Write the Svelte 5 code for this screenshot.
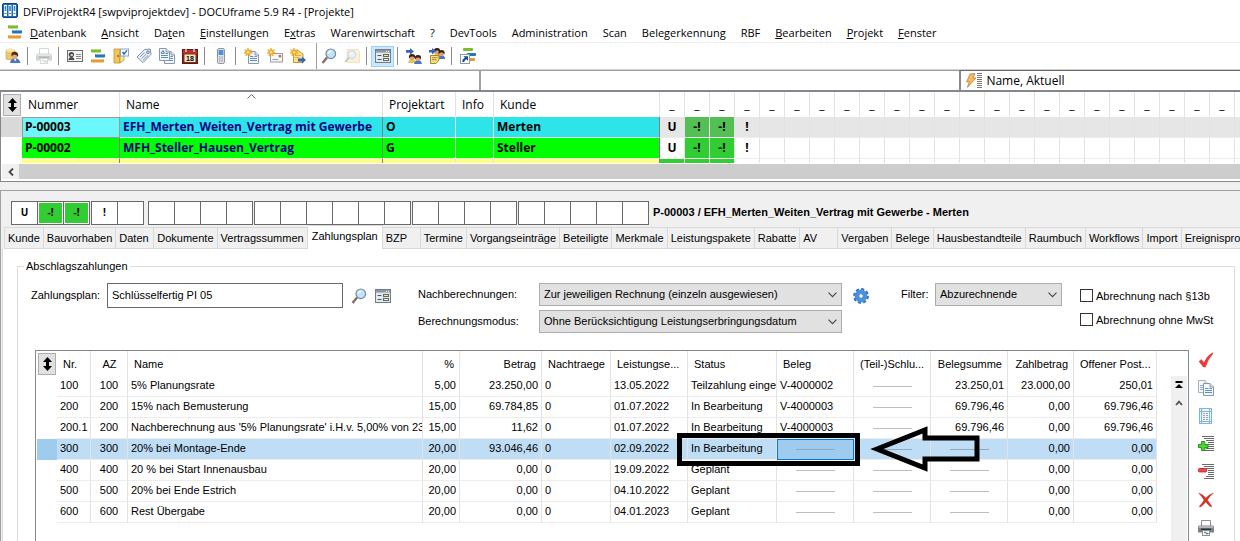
<script lang="ts">
  type Project = { nr: string; name: string; art: string; kunde: string; tone: string; marks: string[] };
  type Rate = {
    nr: string;
    az: string;
    name: string;
    pct: string;
    betrag: string;
    datum: string;
    status: string;
    beleg?: string;
    summe?: string;
    zahl: string;
    offen: string;
  };

  const menu = [
    ['', 'D', 'atenbank'],
    ['', 'A', 'nsicht'],
    ['Da', 't', 'en'],
    ['', 'E', 'instellungen'],
    ['E', 'x', 'tras'],
    ['Warenwirtschaft', '', ''],
    ['?', '', ''],
    ['DevTools', '', ''],
    ['Administration', '', ''],
    ['Scan', '', ''],
    ['Belegerkennung', '', ''],
    ['RBF', '', ''],
    ['', 'B', 'earbeiten'],
    ['', 'P', 'rojekt'],
    ['', 'F', 'enster'],
  ];

  const tools = [
    'user', '|', 'printer-off', '|', 'card', 'bars', 'folder', 'tag', 'docs', 'calendar', '|', 'phone', '|',
    'newdoc', 'newmail', 'newfolder', '||', 'search', 'search-off', '|', 'form', '|', 'people', 'peoplenote', '|', 'link',
  ];

  const sideTools = ['check', 'copy', 'sheet', 'addrow', 'delrow', 'cross', 'printer'];

  const slots = Array.from({ length: 24 }, (_, i) => i);

  const projects: Project[] = [
    { nr: 'P-00003', name: 'EFH_Merten_Weiten_Vertrag mit Gewerbe', art: 'O', kunde: 'Merten', tone: 'cyan', marks: ['U', '-!', '-!', '!'] },
    { nr: 'P-00002', name: 'MFH_Steller_Hausen_Vertrag', art: 'G', kunde: 'Steller', tone: 'green', marks: ['U', '-!', '-!', '!'] },
  ];

  const statusGroups = [
    ['U', '-!', '-!'],
    ['!', ''],
    ['', '', '', ''],
    ['', '', '', '', '', ''],
    ['', '', '', ''],
    ['', '', '', '', ''],
  ];

  const tabs = [
    'Kunde', 'Bauvorhaben', 'Daten', 'Dokumente', 'Vertragssummen', 'Zahlungsplan', 'BZP', 'Termine', 'Vorgangseinträge',
    'Beteiligte', 'Merkmale', 'Leistungspakete', 'Rabatte', 'AV', 'Vergaben', 'Belege', 'Hausbestandteile', 'Raumbuch',
    'Workflows', 'Import', 'Ereignisprotokoll',
  ];
  let activeTab = 'Zahlungsplan';

  const rates: Rate[] = [
    { nr: '100', az: '100', name: '5% Planungsrate', pct: '5,00', betrag: '23.250,00', datum: '13.05.2022', status: 'Teilzahlung einge', beleg: 'V-4000002', summe: '23.250,01', zahl: '23.000,00', offen: '250,01' },
    { nr: '200', az: '200', name: '15% nach Bemusterung', pct: '15,00', betrag: '69.784,85', datum: '01.07.2022', status: 'In Bearbeitung', beleg: 'V-4000003', summe: '69.796,46', zahl: '0,00', offen: '69.796,46' },
    { nr: '200.1', az: '200', name: "Nachberechnung aus '5% Planungsrate' i.H.v. 5,00% von 23", pct: '15,00', betrag: '11,62', datum: '01.07.2022', status: 'In Bearbeitung', beleg: 'V-4000003', summe: '69.796,46', zahl: '0,00', offen: '69.796,46' },
    { nr: '300', az: '300', name: '20% bei Montage-Ende', pct: '20,00', betrag: '93.046,46', datum: '02.09.2022', status: 'In Bearbeitung', zahl: '0,00', offen: '0,00' },
    { nr: '400', az: '400', name: '20 % bei Start Innenausbau', pct: '20,00', betrag: '0,00', datum: '19.09.2022', status: 'Geplant', zahl: '0,00', offen: '0,00' },
    { nr: '500', az: '500', name: '20% bei Ende Estrich', pct: '20,00', betrag: '0,00', datum: '04.10.2022', status: 'Geplant', zahl: '0,00', offen: '0,00' },
    { nr: '600', az: '600', name: 'Rest Übergabe', pct: '20,00', betrag: '0,00', datum: '04.01.2023', status: 'Geplant', zahl: '0,00', offen: '0,00' },
  ];
  let selectedNr = '300';
  let plan = 'Schlüsselfertig PI 05';
</script>

{#snippet person(x: number, y: number, shirt: string)}
  <g transform="translate({x} {y})">
    <path d="M-0.5 9 Q0.5 5 3.5 5 Q6.5 5 7.5 9 Z" fill={shirt} />
    <circle cx="3.5" cy="3.4" r="2.7" fill="#e0a070" />
    <path d="M0.6 4.4 Q-0.4 0 3.6 0 Q7.4 0 6.4 4.4 Q5.6 2.4 3.5 2.6 Q1.6 2.4 0.6 4.4Z" fill="#3a2418" />
  </g>
{/snippet}

{#snippet star()}
  <path d="M4 0 L5 2.6 L7.6 1.6 L6 4 L8.4 5 L5.6 5.6 L6.2 8 L4 6.4 L1.8 8 L2.4 5.6 L0 5 L2 4 L0.6 1.6 L3 2.6Z" fill="#f2a51f" stroke="#f2a51f" stroke-width="0.6" />
  <circle cx="4.1" cy="4.2" r="1.2" fill="#fff0a0" />
{/snippet}

{#snippet lens()}
  <path d="M1.5 15 L6 9.6" stroke="#7d6f68" stroke-width="2.4" />
  <circle cx="9.8" cy="5.8" r="4.8" fill="#c3e1fa" stroke="#7089a3" stroke-width="1.2" />
  <path d="M7.4 5.4 Q8 3.2 10.4 3.2" stroke="#fff" stroke-width="1.4" fill="none" />
{/snippet}

{#snippet sheet(x: number, y: number)}
  <g transform="translate({x} {y})">
    <path d="M0.5 0.5 H7 L10.5 4 V12.5 H0.5 Z" fill="#f4f8fc" stroke="#8a97a6" />
    <path d="M7 0.5 V4 H10.5" fill="#dbe4ee" stroke="#8a97a6" />
    <path d="M2 5.5 H5.5 M2 7.5 H9 M2 9.5 H9 M6.5 5.5 H9" stroke="#5c8fc7" />
  </g>
{/snippet}

{#snippet icon(name: string)}
  <svg class="icon" viewBox="0 0 16 16" width="16" height="16" aria-hidden="true">
    {#if name === 'app'}
      <rect x="0.5" y="0.5" width="15" height="14" rx="1.5" fill="#1b6fb5" stroke="#0d4377" />
      <rect x="2" y="2" width="3" height="11" fill="#fff" />
      <rect x="6.5" y="2" width="3" height="11" fill="#fff" />
      <rect x="11" y="2" width="3" height="11" fill="#fff" />
      <path d="M3.5 3 V8 M8 3 V8 M12.5 3 V8" stroke="#2f80c4" stroke-width="1.6" />
      <path d="M2.5 10.5 H4.5 M7 10.5 H9 M11.5 10.5 H13.5" stroke="#2f80c4" />
    {:else if name === 'bars'}
      <rect x="1" y="1" width="10" height="3.4" rx="1" fill="#7dbb2f" />
      <rect x="5" y="6" width="10" height="3.4" rx="1" fill="#1f78b8" />
      <rect x="1" y="11" width="13" height="3.4" rx="1" fill="#e59a32" />
      <path d="M2 1.5 H10 M6 6.5 H14 M2 11.5 H13" stroke="#fff" stroke-opacity="0.45" />
    {:else if name === 'user'}
      <path d="M1 2 Q6 0 10 2 V11 Q6 13 1 11 Z" fill="#eec768" stroke="#cda145" stroke-width="0.6" />
      <ellipse cx="5.5" cy="2.2" rx="4.5" ry="1.5" fill="#fae7ae" />
      <path d="M5 15 Q6 10 10 10 Q14 10 15.5 15 Z" fill="#4678c4" />
      <path d="M8.6 10.5 L10.2 13.5 L11.6 10.5Z" fill="#fff" />
      <circle cx="9.8" cy="7.6" r="2.9" fill="#e5a873" />
      <path d="M6.6 8.4 Q5.5 3.6 10 3.8 Q14 4 13 9 Q12 6.6 9.6 6.4 Q7.6 6.6 6.6 8.4Z" fill="#4b2a16" />
    {:else if name === 'printer' || name === 'printer-off'}
      <g opacity={name === 'printer-off' ? 0.35 : 1}>
        <path d="M3.5 0.5 H12.5 V7 H3.5Z" fill="#fdfdfd" stroke="#8f8f8f" />
        <path d="M1 5.5 H15 Q16 5.5 16 8 V12.5 H0 V8 Q0 5.5 1 5.5Z" fill="#7d8084" />
        <path d="M1 7 H15" stroke="#c9ccd0" stroke-width="1.4" />
        <rect x="3" y="8.6" width="10" height="1.6" fill="#2c2f33" />
        <rect x="4.5" y="10.5" width="7" height="5" fill="#fff" stroke="#8f8f8f" />
        <path d="M6 12.5 H8" stroke="#43a86a" stroke-width="1.6" />
        <path d="M8 13.5 H10.5" stroke="#3d7fd0" stroke-width="1.6" />
      </g>
    {:else if name === 'card'}
      <rect x="0.5" y="2.5" width="15" height="11" fill="#f3f3f3" stroke="#6c6c6c" />
      <path d="M1.4 12 Q1.8 9 4.4 9 Q7 9 7.4 12Z" fill="#4a4a4a" />
      <circle cx="4.4" cy="6.6" r="2.6" fill="#444" />
      <circle cx="4.7" cy="7" r="1.3" fill="#ccc" />
      <path d="M9 6.5 H14 M9 8.5 H14 M9 10.5 H14" stroke="#8a8a8a" />
    {:else if name === 'folder'}
      <path d="M1 1 H7 V15 H1Z" fill="#f0c65a" stroke="#c4922b" stroke-width="0.8" />
      <path d="M7 4 H11 V12 L7 15Z" fill="#fbe39a" stroke="#c4922b" stroke-width="0.8" />
      <rect x="7.5" y="1" width="8" height="7" fill="#fff" stroke="#86a7cf" />
      <path d="M9.5 4 L11 6 L14 2.4" stroke="#2c66b8" stroke-width="1.4" fill="none" />
      <circle cx="5" cy="8" r="0.9" fill="#8c6112" />
    {:else if name === 'tag'}
      <path d="M1 9 L8.6 1.6 L14.2 1 L15 6.4 L7 14.6 Z" fill="#eef2f7" stroke="#7c8ea4" />
      <circle cx="12" cy="4.2" r="1.3" fill="#fff" stroke="#4c78ac" />
      <path d="M4 9 L8.6 4.6 M5.6 10.6 L10.4 6 M7 12.2 L12 7.4" stroke="#7d95b3" />
    {:else if name === 'docs'}
      {@render sheet(5, 3)}
      {@render sheet(0, 0)}
      <path d="M2 5 L4 2.5 L5.4 5" stroke="#3f6fae" fill="none" />
    {:else if name === 'calendar'}
      <rect x="0.5" y="1.5" width="15" height="14" fill="#7d2a22" stroke="#5c1d18" />
      <rect x="1" y="2" width="14" height="3.6" fill="#b83427" />
      <path d="M4 0.5 V4 M12 0.5 V4" stroke="#d8d8d8" stroke-width="1.4" />
      <rect x="2.5" y="6.5" width="11" height="7.5" fill="#f7e9c4" />
      <text x="8" y="13" text-anchor="middle" font-family="Liberation Sans, sans-serif" font-weight="bold" font-size="7" fill="#000">18</text>
    {:else if name === 'phone'}
      <rect x="4.5" y="0.5" width="7" height="15" rx="1.6" fill="#dfe3e8" stroke="#8c949d" />
      <rect x="5.6" y="2" width="4.8" height="5" fill="#4a90dc" />
      <path d="M6 9 H10 M6 11 H10 M6 13 H10" stroke="#8c949d" stroke-dasharray="1 0.6" />
    {:else if name === 'newdoc'}
      {@render sheet(4, 3)}
      {@render star()}
    {:else if name === 'newmail'}
      <rect x="3.5" y="5.5" width="12" height="8.5" fill="#f6f6f6" stroke="#9c9c9c" />
      <rect x="11.6" y="7" width="2.6" height="2.4" fill="#c96a52" />
      <path d="M5.5 11.5 H11" stroke="#9c9c9c" />
      {@render star()}
    {:else if name === 'newfolder'}
      <path d="M3.5 2.5 H8 L13 6 V14.5 H3.5Z" fill="#fbe08a" stroke="#c99a2e" />
      <path d="M5 7.5 H11 M5 9.5 H9" stroke="#d6b24a" />
      <path d="M8 10.5 H12 V8.4 L16 12 L12 15.6 V13.4 H8Z" fill="#2f66c4" />
      {@render star()}
    {:else if name === 'search'}
      {@render lens()}
    {:else if name === 'search-off'}
      <g opacity="0.4">
        <path d="M3 1.5 H13.5 L15.5 4 V14.5 H3Z" fill="#f2dc9c" stroke="#d8bb6e" />
        <g transform="translate(0 2) scale(0.8)">{@render lens()}</g>
      </g>
    {:else if name === 'form'}
      <rect x="0.5" y="1.5" width="15" height="13" fill="#e6e9ec" stroke="#6e7d8c" />
      <rect x="1" y="2" width="14" height="2.6" fill="#8b98a6" />
      <path d="M11 3.3 H12 M13 3.3 H14" stroke="#fff" />
      <path d="M2.5 7.5 H6.5 M2.5 11.5 H6.5" stroke="#4f5b67" />
      <rect x="8.5" y="6.5" width="5" height="2" fill="#f5e98a" stroke="#5f665c" />
      <rect x="8.5" y="10.5" width="5" height="2" fill="#fff" stroke="#5f665c" />
    {:else if name === 'people'}
      <path d="M0 2 H4 V0 L8 3.4 L4 6.8 V4.8 H0Z" fill="#3465c0" />
      {@render person(2.5, 6, '#e8c14a')}
      {@render person(8.5, 7, '#4678c4')}
    {:else if name === 'peoplenote'}
      {@render person(4.5, 0, '#e8c14a')}
      {@render person(9, 2, '#4678c4')}
      <path d="M0 2 H3 V0 L7 3.2 L3 6.4 V4.4 H0Z" fill="#3465c0" />
      <path d="M1.5 7.5 H10 V12 L7 15.5 H1.5Z" fill="#f5df86" stroke="#a9882f" />
      <path d="M3 9.7 H8.5 M3 11.7 H7.5" stroke="#a9882f" />
    {:else if name === 'link'}
      <rect x="3" y="0" width="10" height="3" rx="1" fill="#7dbb2f" />
      <rect x="7" y="5" width="9" height="3" rx="1" fill="#1f78b8" />
      <rect x="8" y="10" width="7" height="3" rx="1" fill="#e59a32" />
      <rect x="0.5" y="6.5" width="9" height="9" fill="#fff" stroke="#8b98a6" />
      <path d="M3.4 8.2 H8 V12.8 L6.4 11.2 Q4.6 12 4.2 14 H2.2 Q2 11.4 4.8 9.8Z" fill="#1c4b96" />
    {:else if name === 'bolt'}
      <path d="M5 1 L10 0.6 L8 5 L11 5 L2.4 14.4 L4.4 8.6 L1.6 9Z" fill="#f3bb62" stroke="#b98039" stroke-width="0.8" />
    {:else if name === 'check'}
      <path d="M1 9.4 L3.4 7.6 L6 10.6 Q9 4 14.4 0.8 L15 1.4 Q10 7 7.4 15 L5.4 15Z" fill="#f0383d" stroke="#c9282e" stroke-width="0.4" />
    {:else if name === 'copy'}
      <g opacity="0.75">{@render sheet(0, 0)}</g>
      {@render sheet(5, 3)}
    {:else if name === 'sheet'}
      <rect x="1.5" y="0.5" width="12" height="15" fill="#eef6fb" stroke="#7cb8dc" />
      <path d="M1.5 3.5 H13.5 M3.5 0.5 V15.5 M11.5 0.5 V15.5 M1.5 13.5 H13.5" stroke="#7cb8dc" />
      <path d="M5 5.5 H10 M5 7.5 H10 M5 9.5 H10 M5 11.5 H10" stroke="#93a4b3" />
      <path d="M7.5 5 V12" stroke="#eef6fb" />
    {:else if name === 'addrow' || name === 'delrow'}
      <path d="M4 0.5 H16 M6 2.5 H16 M8 4.5 H16 M10 6.5 H16 M10 8.5 H16 M10 10.5 H16 M8 12.5 H16 M6 14.5 H16" stroke="#6a6a6a" />
      {#if name === 'addrow'}
        <path d="M3.6 5.5 H6.8 V8.6 H10 V11.6 H6.8 V14.6 H3.6 V11.6 H0.5 V8.6 H3.6Z" fill="#4fd636" stroke="#1f9412" />
      {:else}
        <rect x="0.5" y="4.5" width="8" height="3.4" rx="1" fill="#f2484c" stroke="#c9282e" />
      {/if}
    {:else if name === 'cross'}
      <path d="M0.8 1 Q5 2.4 7.8 6 Q11 2.4 15.4 1 Q11 5 9.4 8 Q11.4 11 14 14.6 L12 14.4 Q9.6 12.2 7.8 10 Q5.4 13 2 15.2 L1.4 14.2 Q4.6 11 6 8 Q3.6 4.4 0.8 1Z" fill="#d8321f" stroke="#b52a1a" stroke-width="0.4" />
    {:else if name === 'gear'}
      <circle cx="8" cy="8" r="6.6" fill="none" stroke="#2f6fc0" stroke-width="2.6" stroke-dasharray="3 2.18" />
      <circle cx="8" cy="8" r="4.4" fill="none" stroke="#4a90e0" stroke-width="4" />
      <circle cx="8" cy="8" r="2.2" fill="#fff" stroke="#2a65b0" stroke-width="0.8" />
    {/if}
  </svg>
{/snippet}

{#snippet sorter()}
  <button class="sorter" type="button" aria-label="Sortierung">
    <svg viewBox="0 0 9 14" width="9" height="14" aria-hidden="true">
      <path d="M4.5 0 L9 5 H6 V9 H9 L4.5 14 L0 9 H3 V5 H0Z" fill="#000" />
    </svg>
  </button>
{/snippet}

{#snippet chevron()}
  <svg class="chevron" viewBox="0 0 9 6" width="9" height="6" aria-hidden="true">
    <path d="M0.5 0.7 L4.5 4.7 L8.5 0.7" fill="none" stroke="#444" stroke-width="1.1" />
  </svg>
{/snippet}

<div class="window">
  <header class="title">
    {@render icon('app')}
    <span>DFViProjektR4 [swpviprojektdev] - DOCUframe 5.9 R4 - [Projekte]</span>
  </header>

  <nav class="menu">
    {@render icon('bars')}
    {#each menu as [before, key, after]}
      <button type="button">{before}{#if key}<u>{key}</u>{/if}{after}</button>
    {/each}
  </nav>

  <div class="tools">
    {#each tools as tool}
      {#if tool === '|' || tool === '||'}
        <i class:full={tool === '||'}></i>
      {:else}
        <button type="button" aria-label={tool} class:on={tool === 'form'}>{@render icon(tool)}</button>
      {/if}
    {/each}
  </div>

  <div class="filters">
    <input type="text" aria-label="Suche" />
    <input type="text" aria-label="Filter" />
    <button type="button">
      {@render icon('bolt')}
      <span class="grip"></span>
      Name, Aktuell
    </button>
  </div>

  <section class="projects">
    <table>
      <colgroup>
        <col style="width: 21px" />
        <col style="width: 98px" />
        <col style="width: 263px" />
        <col style="width: 73px" />
        <col style="width: 38px" />
        <col style="width: 166px" />
        {#each slots as slot (slot)}<col style="width: 25px" />{/each}
      </colgroup>
      <thead>
        <tr>
          <th class="pick">{@render sorter()}</th>
          <th>Nummer</th>
          <th class="sorted">
            Name
            <svg viewBox="0 0 9 5" width="9" height="5" aria-hidden="true"><path d="M0.5 4.5 L4.5 0.6 L8.5 4.5" fill="none" stroke="#666" /></svg>
          </th>
          <th>Projektart</th>
          <th>Info</th>
          <th>Kunde</th>
          {#each slots as slot (slot)}<th class="slot">_</th>{/each}
        </tr>
      </thead>
      <tbody>
        {#each projects as project, i}
          <tr class={project.tone} class:current={i === 0}>
            <td class="pick"></td>
            <td class="nr">{project.nr}</td>
            <td class="name">{project.name}</td>
            <td>{project.art}</td>
            <td></td>
            <td class="dark">{project.kunde}</td>
            {#each slots as slot (slot)}
              <td class="slot" class:ok={project.marks[slot] === '-!'}>{project.marks[slot] ?? ''}</td>
            {/each}
          </tr>
        {/each}
        <tr class="yellow cut">
          <td class="pick"></td>
          <td class="nr"></td>
          <td class="name"></td>
          <td></td>
          <td></td>
          <td class="dark"></td>
          {#each slots as slot (slot)}<td class="slot" class:ok={slot < 3}></td>{/each}
        </tr>
      </tbody>
    </table>
    <div class="hscroll">
      <button type="button" aria-label="Nach links">
        <svg viewBox="0 0 6 8" width="6" height="8" aria-hidden="true"><path d="M5 0.5 L1.5 4 L5 7.5" fill="none" stroke="#444" stroke-width="1.8" /></svg>
      </button>
      <div class="thumb"></div>
    </div>
  </section>

  <section class="detail">
    <div class="statusbar">
      {#each statusGroups as group}
        <div class="group">
          {#each group as mark}
            <span class:ok={mark === '-!'}>{mark}</span>
          {/each}
        </div>
      {/each}
      <strong>P-00003 / EFH_Merten_Weiten_Vertrag mit Gewerbe - Merten</strong>
    </div>

    <div class="tabs" role="tablist">
      {#each tabs as tab}
        <button type="button" role="tab" aria-selected={tab === activeTab} class:active={tab === activeTab} on:click={() => (activeTab = tab)}>{tab}</button>
      {/each}
    </div>

    <div class="page">
      <fieldset>
        <legend>Abschlagszahlungen</legend>

        <div class="form">
          <div class="plan">
            <label for="plan">Zahlungsplan:</label>
            <input id="plan" type="text" bind:value={plan} />
            <button type="button" aria-label="Suchen">{@render icon('search')}</button>
            <button type="button" aria-label="Formular">{@render icon('form')}</button>
          </div>

          <div class="modes">
            <label for="nach">Nachberechnungen:</label>
            <span class="drop">
              <select id="nach"><option>Zur jeweiligen Rechnung (einzeln ausgewiesen)</option></select>
              {@render chevron()}
            </span>
            <label for="modus">Berechnungsmodus:</label>
            <span class="drop">
              <select id="modus"><option>Ohne Berücksichtigung Leistungserbringungsdatum</option></select>
              {@render chevron()}
            </span>
          </div>

          <button class="settings" type="button" aria-label="Einstellungen">{@render icon('gear')}</button>

          <div class="filter">
            <label for="filter">Filter:</label>
            <span class="drop">
              <select id="filter"><option>Abzurechnende</option></select>
              {@render chevron()}
            </span>
          </div>

          <div class="checks">
            <label><input type="checkbox" />Abrechnung nach §13b</label>
            <label><input type="checkbox" />Abrechnung ohne MwSt</label>
          </div>
        </div>

        <div class="body">
          <div class="grid">
            <table>
              <colgroup>
                {#each [20, 34, 37, 295, 37, 82, 69, 77, 89, 77, 77, 77, 66, 83] as width}
                  <col style="width: {width}px" />
                {/each}
              </colgroup>
              <thead>
                <tr>
                  <th class="pick">{@render sorter()}</th>
                  <th>Nr.</th>
                  <th class="mid">AZ</th>
                  <th>Name</th>
                  <th class="num">%</th>
                  <th class="num">Betrag</th>
                  <th>Nachtraege</th>
                  <th>Leistungse...</th>
                  <th>Status</th>
                  <th>Beleg</th>
                  <th>(Teil-)Schlu...</th>
                  <th class="num">Belegsumme</th>
                  <th class="num">Zahlbetrag</th>
                  <th>Offener Post...</th>
                </tr>
              </thead>
              <tbody>
                {#each rates as rate (rate.nr)}
                  <tr class:selected={rate.nr === selectedNr} on:click={() => (selectedNr = rate.nr)}>
                    <td class="pick"></td>
                    <td>{rate.nr}</td>
                    <td class="mid">{rate.az}</td>
                    <td>{rate.name}</td>
                    <td class="num">{rate.pct}</td>
                    <td class="num">{rate.betrag}</td>
                    <td>0</td>
                    <td>{rate.datum}</td>
                    <td>{rate.status}</td>
                    <td class="beleg">{#if rate.beleg}{rate.beleg}{:else}<hr />{/if}</td>
                    <td><hr /></td>
                    <td class="num">{#if rate.summe}{rate.summe}{:else}<hr />{/if}</td>
                    <td class="num">{rate.zahl}</td>
                    <td class="num">{rate.offen}</td>
                  </tr>
                {/each}
              </tbody>
            </table>

            <div class="vscroll">
              <svg viewBox="0 0 8 8" width="8" height="8" aria-hidden="true"><path d="M0.5 1 H7.5" stroke="#000" stroke-width="2" /><path d="M4 3 L8 7 H0Z" fill="#000" /></svg>
              <svg viewBox="0 0 8 6" width="8" height="6" aria-hidden="true"><path d="M1 5 L4 1.6 L7 5" fill="none" stroke="#555" stroke-width="1.8" /></svg>
            </div>

            <div class="marker"></div>
            <svg class="arrow" viewBox="0 0 112 50" width="112" height="50" aria-hidden="true">
              <path d="M7 24 L55 5 V13 H107 V34 H55 V43 Z" fill="none" stroke="#000" stroke-width="5" />
            </svg>
          </div>

          <div class="side">
            {#each sideTools as tool}
              <button type="button" aria-label={tool}>{@render icon(tool)}</button>
            {/each}
          </div>
        </div>
      </fieldset>
    </div>
  </section>
</div>

<style>
  :global(body) {
    margin: 0;
    overflow: hidden;
  }

  .window {
    height: 100vh;
    display: flex;
    flex-direction: column;
    overflow: hidden;
    background: #fff;
    color: #000;
    font-family: 'Open Sans', 'Noto Sans', sans-serif;
    font-size: 12px;
  }

  .window * {
    box-sizing: border-box;
  }

  button {
    margin: 0;
    padding: 0;
    border: 0;
    background: none;
    color: inherit;
    font: inherit;
    white-space: nowrap;
  }

  .icon {
    display: block;
    flex: none;
  }

  .title,
  .menu,
  .tools,
  .filters {
    display: flex;
    align-items: center;
    flex: none;
  }

  .title {
    height: 22px;
    gap: 5px;
    padding-left: 2px;
    font-size: 11px;
    white-space: nowrap;
  }

  .menu {
    height: 20px;
    gap: 15px;
    padding-left: 7px;
    font-size: 11px;
  }

  .menu .icon {
    margin-right: -8px;
  }

  .menu u {
    text-underline-offset: 1px;
  }

  .tools {
    height: 28px;
    padding-left: 1px;
    border-top: 1px solid #f0f0f0;
    border-bottom: 1px solid #d0d0d0;
  }

  .tools button {
    width: 23px;
    height: 21px;
    display: grid;
    place-items: center;
  }

  .tools .on {
    background: #cce8ff;
    outline: 1px solid #99d1ff;
    outline-offset: -1px;
  }

  .tools i {
    width: 8px;
    height: 18px;
    border-left: 1px solid #8c8c8c;
    margin-left: 3px;
    margin-right: -3px;
  }

  .tools .full {
    height: 26px;
    margin-left: 7px;
    margin-right: -7px;
    border-color: #a0a0a0;
  }

  .filters {
    height: 22px;
    border-bottom: 2px solid #828790;
  }

  .filters input,
  .filters button {
    height: 20px;
    border: 0;
    border-top: 1px solid #a0a0a0;
    background: #fff;
  }

  .filters input {
    flex: 480 1 0;
    min-width: 0;
    padding: 0 4px;
    font: inherit;
  }

  .filters input + input {
    border-left: 2px solid #a0a0a0;
  }

  .filters button {
    flex: 280 1 0;
    display: flex;
    align-items: center;
    gap: 2px;
    padding-left: 4px;
    border-top-color: #696969;
    border-left: 2px solid #828790;
  }

  .grip {
    width: 5px;
    height: 15px;
    margin-left: -6px;
    margin-right: 2px;
    background: repeating-linear-gradient(#777 0 1px, #fff 1px 2px);
  }

  table {
    border-collapse: separate;
    border-spacing: 0;
    table-layout: fixed;
    width: 0;
    flex: none;
  }

  th,
  td {
    overflow: hidden;
    white-space: nowrap;
    text-align: left;
  }

  th {
    font-weight: normal;
  }

  .sorter {
    display: grid;
    place-items: center;
    width: 18px;
    height: 22px;
    border: 1px solid #adadad;
    background: #e1e1e1;
  }

  .projects {
    flex: none;
    overflow: hidden;
    border-left: 1px solid #828790;
    border-bottom: 1px solid #828790;
  }

  .projects th {
    position: relative;
    height: 25px;
    padding: 0 6px;
    border-right: 1px solid #e3e3e3;
  }

  .projects th.pick {
    padding: 0 0 0 2px;
    border: 0;
  }

  .projects th.slot,
  .projects td.slot {
    padding: 0;
    text-align: center;
  }

  .sorted svg {
    position: absolute;
    top: 2px;
    left: 50%;
    margin-left: -4px;
  }

  .projects td {
    height: 21px;
    padding: 0 3px;
    border-right: 1px solid #e3e3e3;
    border-bottom: 1px solid #ececec;
    font-weight: bold;
    line-height: 16px;
  }

  .projects .cut td {
    height: 4px;
    border-bottom: 0;
  }

  .projects td.nr,
  .projects td.name,
  .projects td.dark {
    border-right-color: #808080;
  }

  .projects td.name {
    color: #000080;
  }

  .projects td.pick {
    border-right: 0;
    border-color: #fff;
  }

  .cyan td { background: #2de5e8; }
  .green td { background: #00ff00; }
  .yellow td { background: #ffff80; }

  .cyan td.nr {
    background: #6cf8fa;
    outline: 1px solid #9a9a9a;
    outline-offset: -1px;
  }

  .projects td.pick,
  .projects td.slot { background: #fff; }

  .projects .current td.pick { background: #d9d9d9; }
  .projects .current td.slot { background: #e6e6e6; }
  .projects td.slot.ok { background: #32cd32; }
  .projects .current td.slot.ok { background: #54bf54; }

  .hscroll {
    display: flex;
    height: 18px;
    padding: 1px 0 2px 1px;
  }

  .hscroll button {
    width: 17px;
    display: grid;
    place-items: center;
    background: #f0f0f0;
  }

  .thumb {
    flex: 1;
    background: #cdcdcd;
  }

  .detail {
    flex: 1;
    min-height: 0;
    display: flex;
    flex-direction: column;
    margin-top: 8px;
    border-top: 1px solid #a0a0a0;
    border-left: 1px solid #a0a0a0;
    background: #f0f0f0;
    font-family: 'Liberation Sans', Arial, sans-serif;
    font-size: 11px;
    box-shadow: 0 -8px #f0f0f0;
  }

  .statusbar {
    display: flex;
    align-items: center;
    gap: 1px;
    padding: 10px 0 0 10px;
  }

  .group {
    display: flex;
    border-left: 1px solid #696969;
  }

  .group:nth-child(2) {
    margin-right: 3px;
  }

  .group span {
    width: 26px;
    height: 24px;
    border: 1px solid #696969;
    border-left: 0;
    background: #fff;
    box-shadow: inset 0 0 0 1px #fff;
    font-family: 'Open Sans', 'Noto Sans', sans-serif;
    font-size: 10px;
    font-weight: bold;
    line-height: 21px;
    text-align: center;
  }

  .group .ok {
    background: #32cd32;
  }

  .statusbar strong {
    margin-left: 3px;
    padding-bottom: 2px;
    white-space: nowrap;
  }

  .tabs {
    display: flex;
    align-items: flex-end;
    flex: none;
    height: 24px;
    padding-left: 3px;
  }

  .tabs button {
    flex: none;
    height: 22px;
    min-width: 38px;
    padding: 0 3px;
    border: 1px solid #d9d9d9;
    border-left: 0;
    text-align: left;
  }

  .tabs button:first-child {
    border-left: 1px solid #d9d9d9;
  }

  .tabs .active {
    height: 24px;
    padding: 0 4px 3px;
    border-bottom: 0;
    background: #fff;
  }

  .page {
    flex: 1;
    min-height: 0;
    margin-left: 1px;
    padding: 10px 5px 0 14px;
    border-left: 1px solid #d9d9d9;
    background: #fff;
  }

  fieldset {
    min-width: 0;
    height: 100%;
    margin: 0;
    padding: 10px 0 0;
    border: 1px solid #dcdcdc;
    border-bottom: 0;
  }

  legend {
    margin-left: 6px;
    padding: 0 2px;
    line-height: 14px;
  }

  .form {
    display: flex;
    align-items: flex-start;
    padding-left: 13px;
  }

  .plan,
  .filter {
    display: flex;
    align-items: center;
    flex: none;
  }

  .plan label,
  .modes label,
  .filter label {
    padding-bottom: 2px;
  }

  .plan {
    width: 387px;
  }

  .plan label {
    width: 76px;
  }

  .plan input {
    width: 236px;
    height: 25px;
    padding: 0 4px 2px;
    border: 1px solid #696969;
    font: inherit;
  }

  .plan button {
    margin-left: 8px;
  }

  .modes {
    display: grid;
    grid-template-columns: 121px 303px;
    row-gap: 4px;
    align-items: center;
  }

  .drop {
    position: relative;
    display: block;
  }

  .drop select {
    display: block;
    width: 100%;
    height: 23px;
    padding: 0 4px 2px;
    border: 1px solid #adadad;
    border-radius: 0;
    background: #e1e1e1;
    color: #000;
    font: inherit;
    appearance: none;
  }

  .chevron {
    position: absolute;
    top: 9px;
    right: 5px;
    pointer-events: none;
  }

  .settings {
    width: 59px;
    padding: 5px 0 0 11px;
  }

  .filter label {
    width: 34px;
  }

  .filter .drop {
    width: 127px;
  }

  .checks {
    display: grid;
    gap: 11px;
    padding: 6px 0 0 18px;
    white-space: nowrap;
  }

  .checks label {
    display: flex;
    align-items: center;
    gap: 3px;
    height: 13px;
  }

  .checks input {
    width: 13px;
    height: 13px;
    margin: 0;
    border: 1px solid #333;
    background: #fff;
    appearance: none;
  }

  .checks input:checked {
    box-shadow: inset 0 0 0 3px #fff, inset 0 0 0 13px #333;
  }

  .body {
    display: flex;
    align-items: stretch;
    margin: 17px 0 0 17px;
  }

  .grid {
    position: relative;
    flex: 1;
    display: flex;
    align-items: flex-start;
    min-height: 200px;
    padding-left: 1px;
    border: 1px solid #828790;
  }

  .grid th {
    height: 25px;
    padding: 0 5px 0 6px;
    border-right: 1px solid #e3e3e3;
  }

  .grid th.pick {
    padding: 1px 0 0 1px;
    border: 0;
  }

  .grid td {
    height: 21px;
    padding: 0 3px 2px;
    border-right: 1px solid #e3e3e3;
    border-bottom: 1px solid #ececec;
    line-height: 14px;
  }

  .grid td.pick {
    border-color: transparent;
  }

  .grid .num {
    text-align: right;
  }

  .grid .mid {
    text-align: center;
  }

  .grid hr {
    width: 39px;
    height: 1px;
    margin: 2px auto 0;
    border: 0;
    background: #bdbdbd;
  }

  .selected td {
    background: #bfddf5;
  }

  .selected td.pick,
  .selected td.beleg {
    background: #9fcbee;
  }

  .selected td.beleg {
    outline: 1px solid #0078d7;
    outline-offset: -1px;
  }

  .selected hr {
    background: #8fa9bf;
  }

  .vscroll {
    display: flex;
    flex-direction: column;
    align-items: center;
    gap: 11px;
    align-self: stretch;
    width: 16px;
    margin: 25px 1px 0 auto;
    padding-top: 5px;
    background: #f0f0f0;
  }

  .marker {
    position: absolute;
    top: 82px;
    left: 641px;
    width: 183px;
    height: 33px;
    border: 5px solid #000;
  }

  .arrow {
    position: absolute;
    top: 74px;
    left: 834px;
  }

  .side {
    flex: none;
    width: 45px;
    padding-left: 9px;
    margin-top: -4px;
  }

  .side button {
    display: grid;
    place-items: center;
    height: 28px;
  }
</style>
